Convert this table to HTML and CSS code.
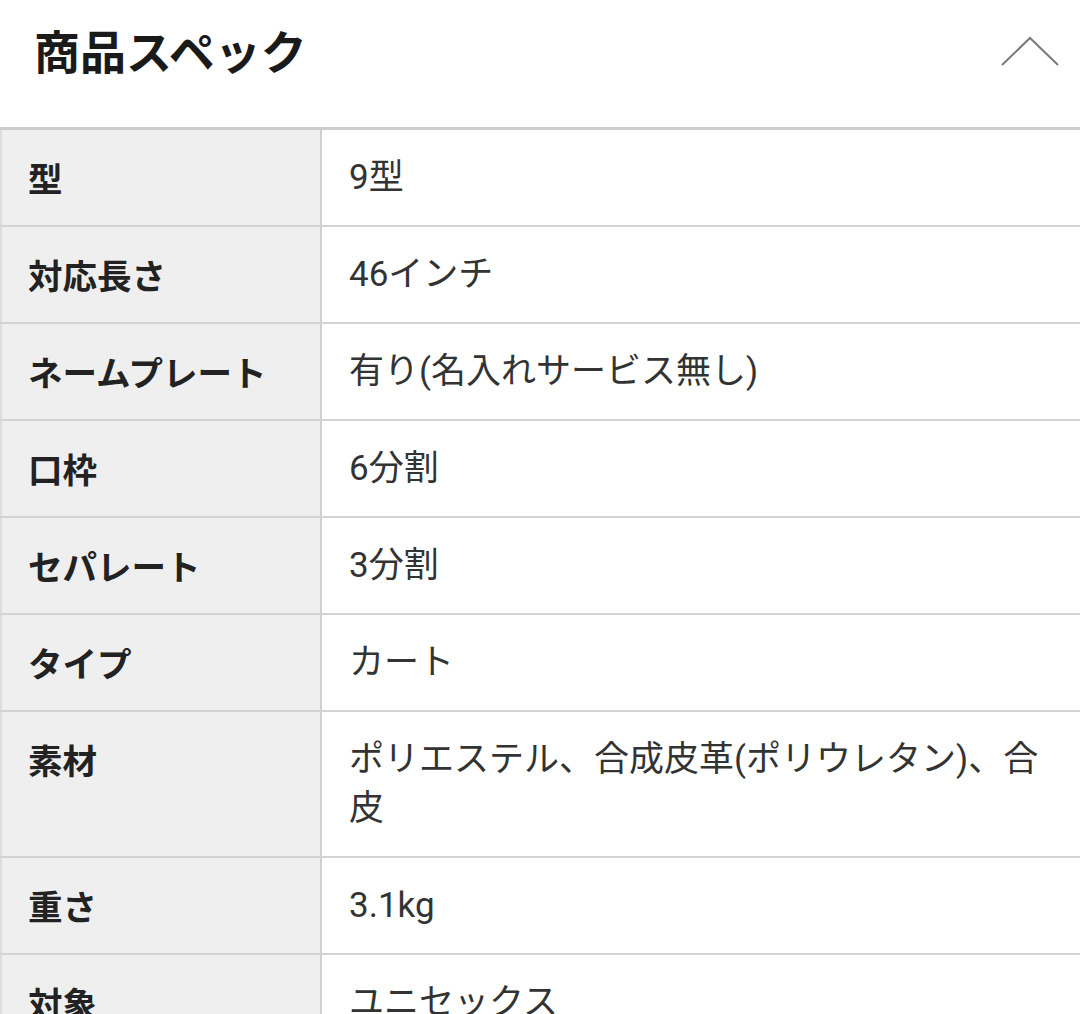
FILE: index.html
```html
<!DOCTYPE html>
<html lang="ja">
<head>
<meta charset="utf-8">
<link rel="stylesheet" href="styles.css">
</head>
<body>
<section class="spec">
  <header class="spec-head">
    <h2 class="spec-title">商品スペック</h2>
    <svg class="chev" width="60" height="32" viewBox="0 0 60 32"><path d="M2 30 L30 3 L58 30" fill="none" stroke="#7a7a7a" stroke-width="2"/></svg>
  </header>
  <table class="spec-table">
    <tr><th>型</th><td>9型</td></tr>
    <tr><th>対応長さ</th><td>46インチ</td></tr>
    <tr><th>ネームプレート</th><td>有り(名入れサービス無し)</td></tr>
    <tr><th>口枠</th><td>6分割</td></tr>
    <tr><th>セパレート</th><td>3分割</td></tr>
    <tr><th>タイプ</th><td>カート</td></tr>
    <tr><th>素材</th><td>ポリエステル、合成皮革(ポリウレタン)、合皮</td></tr>
    <tr><th>重さ</th><td>3.1kg</td></tr>
    <tr><th>対象</th><td>ユニセックス</td></tr>
  </table>
</section>
</body>
</html>
```
FILE: styles.css
```css
html, body {
  margin: 0;
  padding: 0;
  background: #ffffff;
}
body {
  font-family: Roboto, "Noto Sans CJK JP", sans-serif;
  color: #222;
  width: 1080px;
  overflow: hidden;
}
.spec-head {
  height: 127px;
  display: flex;
  align-items: flex-start;
  justify-content: space-between;
  box-sizing: border-box;
  padding: 0 20px 0 34px;
}
.spec-title {
  margin: 21px 0 0 0;
  font-family: "Noto Sans CJK JP", sans-serif;
  font-size: 46px;
  line-height: 56px;
  font-weight: 700;
  color: #1a1a1a;
  letter-spacing: 0;
}
.chev {
  margin-top: 35px;
}
.spec-table {
  width: 1080px;
  border-collapse: collapse;
  border-top: 3px solid #cdcdcd;
  border-left: 2px solid #dcdcdc;
}
.spec-table th,
.spec-table td {
  border-bottom: 2px solid #d3d3d3;
  padding: 23px 38px 23px 27px;
  line-height: 49px;
  font-size: 35px;
  vertical-align: top;
  text-align: left;
}
.spec-table th {
  width: 320px;
  box-sizing: border-box;
  background: #efefef;
  font-family: "Noto Sans CJK JP", sans-serif;
  font-size: 34.5px;
  font-weight: 700;
  color: #222;
  border-right: 2px solid #d0d0d0;
  padding-left: 26px;
  padding-right: 10px;
}
.spec-table td {
  font-weight: 400;
  color: #333;
}
```
